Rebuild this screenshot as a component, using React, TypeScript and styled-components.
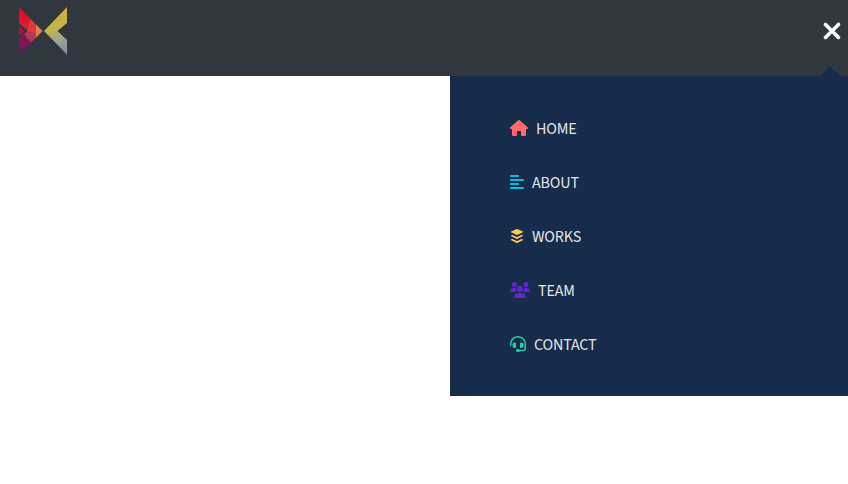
import React from 'react';
import styled, { createGlobalStyle } from 'styled-components';
import { FaHouse, FaAlignLeft, FaBuffer, FaUsers, FaHeadset, FaXmark } from 'react-icons/fa6';

const GlobalStyle = createGlobalStyle`
  * { box-sizing: border-box; }
  body { margin: 0; background: #fff; overflow: hidden; font-family: "Source Sans Pro", "Source Sans 3", "Noto Sans CJK SC", sans-serif; }
`;

const Header = styled.header`
  display: flex;
  justify-content: space-between;
  align-items: flex-start;
  height: 76px;
  padding: 6px 3px 0 18px;
  background: #30373f;
`;

const Logo = styled.svg`
  display: block;
  width: 50px;
  height: 50px;
`;

const CloseButton = styled.button`
  position: relative;
  display: flex;
  justify-content: center;
  width: 26px;
  height: 70px;
  padding: 12px 0 0;
  border: 0;
  color: #fff;
  font-size: 26px;
  background: none;

  svg {
    stroke: currentColor;
    stroke-width: 8px;
  }

  &::after {
    content: '';
    position: absolute;
    left: 1px;
    bottom: 0;
    border: 10px solid transparent;
    border-top: 0;
    border-bottom-color: #172b4b;
  }
`;

const Menu = styled.nav`
  width: 398px;
  height: 320px;
  margin-left: auto;
  padding: 25px 60px;
  background: #172b4b;
`;

const MenuLink = styled.a<{ $accent: string; $iconWidth: number }>`
  display: flex;
  align-items: center;
  gap: 8px;
  height: 54px;
  color: #e3e3e3;
  font-size: 16px;
  line-height: 24px;
  letter-spacing: -0.15px;

  svg {
    flex: none;
    color: ${({ $accent }) => $accent};
    width: ${({ $iconWidth }) => $iconWidth}px;
    height: 16px;
  }
`;

const Label = styled.span`
  padding-top: 2px;
`;

const links = [
  { label: 'HOME', Icon: FaHouse, accent: '#ff6b6b', width: 18 },
  { label: 'ABOUT', Icon: FaAlignLeft, accent: '#0abde3', width: 14 },
  { label: 'WORKS', Icon: FaBuffer, accent: '#feca57', width: 14 },
  { label: 'TEAM', Icon: FaUsers, accent: '#5f27cd', width: 20 },
  { label: 'CONTACT', Icon: FaHeadset, accent: '#1dd1a1', width: 16 },
];

function ButterflyLogo() {
  return (
    <Logo viewBox="0 0 50 50" aria-label="Logo">
      <defs>
        <linearGradient id="left" x1="0" y1="0" x2="0" y2="1">
          <stop offset="0" stopColor="#e5001f" />
          <stop offset=".42" stopColor="#d9202f" />
          <stop offset=".7" stopColor="#8c1458" />
          <stop offset="1" stopColor="#531b65" />
        </linearGradient>
        <linearGradient id="right" x1=".4" y1="0" x2=".6" y2="1">
          <stop offset="0" stopColor="#d6aa27" />
          <stop offset=".45" stopColor="#c5b451" />
          <stop offset=".75" stopColor="#98a493" />
          <stop offset="1" stopColor="#8593a5" />
        </linearGradient>
      </defs>
      <path fill="url(#left)" d="M1 1L24.5 25L1 48.5V33.5L9.5 25L1 17Z" />
      <path fill="#c00b36" d="M1 20L6 25L1 30Z" />
      <path fill="#d93a3c" d="M12 13L24.5 25L19 30.5L9.5 25Z" />
      <path fill="#dc8050" d="M18 18.5L24.5 25L18 31.5Z" />
      <path fill="#b23b54" d="M9.5 25L18 27V31.5L13 36.5L6 28.5Z" />
      <path fill="#7d1753" d="M1 33.5L6 28.5L13 36.5L9 40.5Z" />
      <path fill="url(#right)" d="M49 1V17L39.5 25L49 34V48.5L26 25Z" />
    </Logo>
  );
}

export default function App() {
  return (
    <>
      <GlobalStyle />
      <Header>
        <ButterflyLogo />
        <CloseButton aria-label="Close menu"><FaXmark /></CloseButton>
      </Header>
      <Menu>
        {links.map(({ label, Icon, accent, width }) => (
          <MenuLink key={label} $accent={accent} $iconWidth={width}><Icon /><Label>{label}</Label></MenuLink>
        ))}
      </Menu>
    </>
  );
}
